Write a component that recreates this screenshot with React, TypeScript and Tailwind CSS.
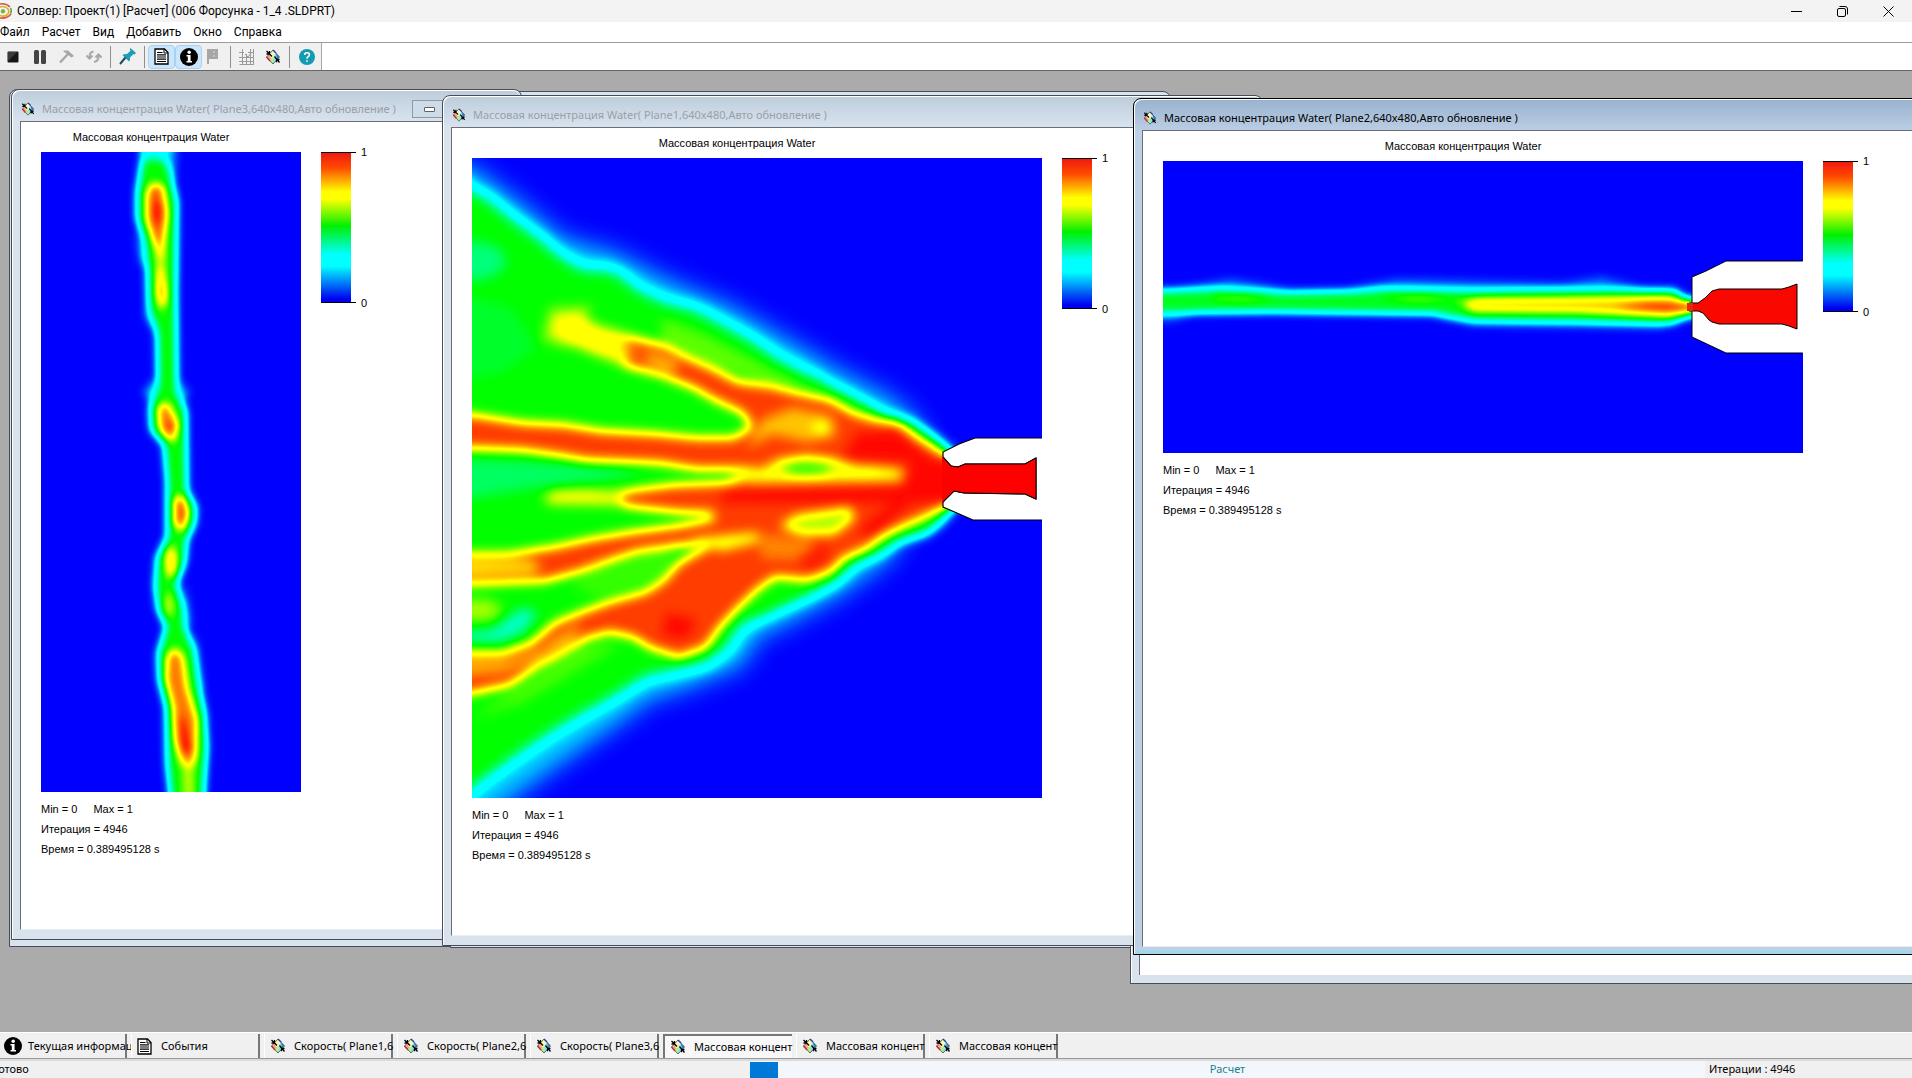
import React from 'react';

const menu = ['Файл', 'Расчет', 'Вид', 'Добавить', 'Окно', 'Справка'];

const tabs = [
  { id: 1, icon: 'info', label: 'Текущая информац' },
  { id: 2, icon: 'doc', label: 'События' },
  { id: 3, icon: 'plane', label: 'Скорость( Plane1,6' },
  { id: 4, icon: 'plane', label: 'Скорость( Plane2,6' },
  { id: 5, icon: 'plane', label: 'Скорость( Plane3,6' },
  { id: 6, icon: 'plane', label: 'Массовая концент', active: true },
  { id: 7, icon: 'plane', label: 'Массовая концент' },
  { id: 8, icon: 'plane', label: 'Массовая концент' },
];

function PlaneIcon({ size = 14 }: { size?: number }) {
  return (
    <svg width={size} height={size} viewBox="0 0 16 16" className="shrink-0" aria-hidden="true">
      <path d="M8 1 L1.5 8 L8 15 L14.5 8 Z" fill="#fff" />
      <path d="M1.5 8 L4.5 5 L7 10 L5 12 Z" fill="#f3a09a" />
      <path d="M4.5 5 L8 1 L10 5 L8 9 L6 9 Z" fill="#fdf7a8" />
      <path d="M4.5 11 L8 8.5 L10 11 L8 15 Z" fill="#b9f07f" />
      <path d="M8 9 L10.5 4 L12 5.5 L12 10.5 L8 15 Z" fill="#8fe6e0" />
      <path d="M11 4 L14.5 8 L12 10.5 Z" fill="#2f7fe0" />
      <path d="M8 1 L1.5 8 L8 15 L14.5 8 Z" fill="none" stroke="#444" strokeWidth="0.8" />
      <path d="M8 1 L11 4" stroke="#1b3fb0" strokeWidth="1.4" />
      <path d="M1.5 8 L5 12" stroke="#c22a20" strokeWidth="1.4" />
      <path d="M1.5 2 L7 7.5 M4.5 2 V5 H1.5 M9.5 7.500 L14.5 13.5 M11.5 13.200 V10.500 H14.500" fill="none" stroke="#000" strokeWidth="1.3" />
    </svg>
  );
}

function InfoIcon() {
  return (
    <svg width="18" height="18" viewBox="0 0 18 18" className="shrink-0" aria-hidden="true">
      <circle cx="9" cy="9" r="9" fill="#000" />
      <circle cx="9.2" cy="4.2" r="1.7" fill="#fff" />
      <path d="M6.5 7 H10.6 V13 H12 V14.5 H6.5 V13 H7.8 V8.5 H6.5 Z" fill="#fff" />
    </svg>
  );
}

function DocIcon() {
  return (
    <svg width="15" height="17" viewBox="0 0 15 17" className="shrink-0" aria-hidden="true">
      <path d="M1 1 H10.5 L14 4.5 V16 H1 Z" fill="#fff" stroke="#000" strokeWidth="1.3" />
      <path d="M10 1 V5 H14" fill="none" stroke="#000" />
      <path d="M3 4.5 H8.5 M3 6.8 H12 M3 9 H12 M3 11.2 H12 M3 13.5 H12" stroke="#000" strokeWidth="1.2" />
    </svg>
  );
}

function TabIcon({ name }: { name: string }) {
  if (name === 'info') return <InfoIcon />;
  if (name === 'doc') return <DocIcon />;
  return <PlaneIcon size={16} />;
}

function ToolButton({ label, on, narrow, children }: { label: string; on?: boolean; narrow?: boolean; children: React.ReactNode }) {
  const width = narrow ? 'w-[25px]' : 'w-[27px]';
  return (
    <button
      aria-label={label}
      className={
        on
          ? `flex h-6 items-center justify-center rounded-sm border border-[#a5d2f5] bg-[#cbe5fa] ${width}`
          : `flex h-6 items-center justify-center ${width}`
      }
    >
      {children}
    </button>
  );
}

function Divider() {
  return <div className="mx-[3px] h-[22px] w-px bg-[#8f8f8f]"></div>;
}

function Toolbar() {
  return (
    <div className="flex h-[27px] bg-white">
      <div className="-ml-px flex items-center border-r border-[#a8a8a8] bg-[#f0f0f0] pr-px">
        <ToolButton label="Стоп">
          <svg width="12" height="12" viewBox="0 0 12 12">
            <rect x="0.5" y="0.5" width="11" height="11" rx="1" fill="#161616" />
            <path d="M1 10 L10 1 L1 1 Z" fill="#3a3a3a" />
          </svg>
        </ToolButton>
        <ToolButton label="Пауза">
          <svg width="12" height="14" viewBox="0 0 12 14">
            <rect x="0" y="0" width="5" height="14" rx="1.5" fill="#444" />
            <rect x="7" y="0" width="5" height="14" rx="1.5" fill="#444" />
          </svg>
        </ToolButton>
        <ToolButton label="Параметры">
          <svg width="16" height="15" viewBox="0 0 16 15">
            <path d="M1 13.5 L9.5 4.5" stroke="#a6a6a6" strokeWidth="2.4" />
            <path d="M4.5 1.5 H9 L15 7 L12.5 8.5 L8 5 L4.5 2.5 Z" fill="#a6a6a6" />
          </svg>
        </ToolButton>
        <ToolButton label="Обновить">
          <svg width="16" height="15" viewBox="0 0 16 15" fill="none" stroke="#a6a6a6" strokeWidth="2">
            <path d="M7.5 2.5 Q3.5 3 3.5 8" />
            <path d="M0.5 6.5 L3.5 9.5 L6.5 6.5" />
            <path d="M8 13 Q12.5 12.5 12.5 7" />
            <path d="M9.5 8.5 L12.5 5.5 L15.5 8.5" />
          </svg>
        </ToolButton>
        <Divider />
        <ToolButton label="Закрепить">
          <svg width="18" height="17" viewBox="0 0 18 17">
            <path d="M11.5 0 L17 5 L15.5 6.5 L14.5 6 L11 9.5 Q11.5 12 10 13.5 L3.5 7 Q5.5 5.5 8 6 L11.5 2.8 L10.8 1.3 Z" fill="#1d9db5" />
            <path d="M6.5 9.5 L1 16" stroke="#1b4a5a" strokeWidth="2" />
          </svg>
        </ToolButton>
        <Divider />
        <ToolButton label="События" on>
          <DocIcon />
        </ToolButton>
        <ToolButton label="Текущая информация" on>
          <InfoIcon />
        </ToolButton>
        <ToolButton label="Цели" narrow>
          <svg width="18" height="17" viewBox="0 0 18 17" className="-ml-1">
            <path d="M3 1 H14 V11 H5 V16 H3 Z" fill="#a6a6a6" />
            <path d="M9 4 H11 M9 8 H11" stroke="#c9c9c9" strokeWidth="1.5" />
          </svg>
        </ToolButton>
        <Divider />
        <ToolButton label="Сетка" narrow>
          <svg width="15" height="16" viewBox="0 0 15 16" fill="none" stroke="#9a9a9a">
            <path d="M0 3.5 H5 M0 8.5 H15 M0 12.5 H15 M0.5 15.5 H15 M3.5 0 V16 M7.5 5 V16 M11.5 0 V16 M14.5 0 V16 M9 3.5 H15" />
            <path d="M6 5 L9 8 L12 4" />
          </svg>
        </ToolButton>
        <ToolButton label="Сечение">
          <PlaneIcon size={16} />
        </ToolButton>
        <Divider />
        <ToolButton label="Справка">
          <svg width="16" height="16" viewBox="0 0 16 16">
            <circle cx="8" cy="8" r="8" fill="#139bb0" />
            <path d="M5.6 6 Q5.6 3.8 8 3.8 Q10.4 3.8 10.4 5.8 Q10.4 7 9 7.8 Q8 8.4 8 9.8 M8 11.2 V12.8" fill="none" stroke="#fff" strokeWidth="1.6" />
          </svg>
        </ToolButton>
      </div>
    </div>
  );
}

// Turns a blurred grey field (0..1) into the blue-cyan-green-yellow-red palette
function Palette({ id, blur }: { id: string; blur: number }) {
  return (
    <filter id={id} filterUnits="userSpaceOnUse" x="-60" y="-60" width="800" height="800" colorInterpolationFilters="sRGB">
      <feGaussianBlur stdDeviation={blur} />
      <feComponentTransfer>
        <feFuncR type="table" tableValues="0 0 0 0 0 0 0 0 0 0 0 .25 .5 .78 1 1 1 1 1 1 1" />
        <feFuncG type="table" tableValues="0 .2 .45 .75 1 1 1 1 1 1 1 1 1 1 1 1 .8 .6 .42 .22 .03" />
        <feFuncB type="table" tableValues="1 1 1 1 1 1 1 .75 .5 .25 0 0 0 0 0 0 0 0 0 0 0" />
      </feComponentTransfer>
    </filter>
  );
}

function Plane1Plot() {
  return (
    <svg width="570" height="640" viewBox="0 0 570 640" className="block">
      <defs>
        <Palette id="field1" blur={6} />
        <filter id="haze1" x="-20%" y="-20%" width="140%" height="140%" colorInterpolationFilters="sRGB">
          <feGaussianBlur stdDeviation="10" />
        </filter>
        <filter id="soft1" x="-20%" y="-20%" width="140%" height="140%" colorInterpolationFilters="sRGB">
          <feGaussianBlur stdDeviation="5" />
        </filter>
      </defs>
      <g filter="url(#field1)">
        <rect x="-60" y="-60" width="800" height="800" fill="#000" />
        <path
          d="M-40 5 L0 22 L41 52 L87 90 L138 104 L193 132 L253 157 L308 189 L358 219 L413 248 L430 262 L440 275 L430 360 L409 395 L363 428 L308 458 L280 470 L262 500 L207 522 L174 532 L142 556 L78 600 L23 640 L-40 690 Z"
          fill="#282828"
          stroke="#282828"
          strokeWidth="26"
          filter="url(#haze1)"
        />
        <path
          d="M-40 -5 L0 32 L14 38 L41 60 L69 80 L87 96 L110 110 L138 111 L152 118 L165 130 L193 143 L225 151 L253 166 L280 181 L308 200 L335 214 L358 229 L380 240 L380 407 L363 423 L335 438 L308 450 L280 463 L266 473 L257 490 L234 507 L207 513 L174 520 L142 540 L106 560 L78 577 L51 595 L23 615 L0 632 L-40 680 Z"
          fill="#808080"
          filter="url(#soft1)"
        />
        <path
          d="M340 216 L358 227 L390 242 L413 255 L441 264 L464 279 L480 293 L480 353 L468 366 L455 376 L427 384 L409 396 L381 408 L363 424 L335 438 L308 450 L280 463 Z"
          fill="#808080"
        />
        <ellipse cx="-4" cy="103" rx="38" ry="20" fill="#676767" />
        <path d="M-30 130 L40 150 L65 190 L30 215 L-30 225 Z" fill="#777" />
        <path d="M-30 300 L50 303 L180 312 L130 322 L60 330 L-30 345 Z" fill="#6c6c6c" />
        <path d="M-10 474 L20 472 L50 450 L66 455 L50 475 L25 484 L-10 482 Z" fill="#565656" />
        <ellipse cx="5" cy="452" rx="24" ry="11" fill="#a0a0a0" />
        <path d="M78 150 L120 148 L98 190 L70 182 Z" fill="#a0a0a0" />
        <path d="M190 160 L235 178 L300 212 L345 228 L300 226 L240 208 L190 184 Z" fill="#929292" />
        <path d="M150 375 L200 372 L200 420 L130 440 L100 430 Z" fill="#8a8a8a" />
        <path d="M60 520 L110 488 L150 485 L110 510 L50 545 L0 560 Z" fill="#8e8e8e" />
        <path
          d="M87 169 L106 162 L138 172 L165 181 L193 188 L216 200 L243 212 L266 224 L298 228 L326 235 L358 242 L381 255 L404 262 L427 265 L445 279 L472 296 L490 300 L490 345 L470 350 L450 360 L427 370 L409 379 L395 390 L372 400 L358 414 L335 422 L303 419 L285 432 L266 450 L248 469 L234 489 L207 499 L179 490 L161 479 L138 474 L115 480 L87 497 L64 509 L37 527 L0 535 L-40 542 L-40 493 L0 495 L32 495 L60 485 L83 465 L110 454 L138 444 L174 434 L193 422 L207 405 L230 392 L248 386 L207 387 L165 393 L138 402 L106 414 L73 423 L0 426 L-40 426 L-40 395 L0 396 L37 396 L83 389 L119 381 L161 374 L207 368 L243 361 L240 355 L207 354 L170 350 L142 346 L78 345 L72 340 L83 334 L115 333 L151 334 L170 331 L202 327 L252 325 L280 321 L335 322 L428 321 L430 312 L385 310 L358 302 L335 299 L308 303 L290 311 L225 311 L188 305 L115 302 L87 297 L51 292 L0 290 L-40 290 L-40 257 L0 257 L51 265 L92 267 L129 273 L184 276 L225 280 L262 280 L280 269 L271 255 L243 242 L220 229 L188 217 L151 207 L129 195 L101 183 Z"
          fill="#f1f1f1"
        />
        <path d="M82 160 L106 156 L130 170 L155 180 L165 196 L150 206 L122 196 L98 186 L82 176 Z" fill="#bababa" />
        <path d="M148 186 L170 188 L178 196 L160 200 Z" fill="#e8e8e8" />
        <path d="M178 194 L208 204 L200 216 L172 204 Z" fill="#cfcfcf" />
        <path d="M320 250 L360 258 L364 278 L335 284 L300 276 L275 290 L290 262 Z" fill="#cecece" />
        <path d="M342 264 L358 266 L354 276 L342 274 Z" fill="#b0b0b0" />
        <path d="M255 318 L300 308 L340 304 L395 314 L430 312 L430 322 L280 324 Z" fill="#b5b5b5" />
        <ellipse cx="335" cy="312" rx="24" ry="5" fill="#808080" />
        <path d="M72 336 L150 333 L150 347 L78 346 Z" fill="#b4b4b4" />
        <path d="M308 368 L325 358 L378 350 L382 360 L362 376 L330 376 Z" fill="#a0a0a0" />
        <path d="M215 382 L285 375 L292 382 L250 392 Z" fill="#b0b0b0" />
        <path d="M285 376 L340 382 L345 402 L290 400 Z" fill="#dedede" />
        <path d="M60 502 L80 482 L110 465 L100 485 L60 507 Z" fill="#cfcfcf" />
        <path d="M-10 498 L40 500 L70 490 L60 505 L30 515 L-10 518 Z" fill="#d4d4d4" />
        <path d="M-10 400 L60 402 L70 410 L60 416 L-10 420 Z" fill="#c6c6c6" />
        <path d="M385 275 L425 272 L460 300 L500 300 L500 345 L440 345 L400 380 L385 372 L420 345 L250 345 L250 332 L430 328 L440 305 L370 300 Z" fill="#fff" />
        <path d="M195 455 L225 462 L215 480 L190 478 Z" fill="#fff" />
        <path d="M325 400 L350 385 L360 396 L340 415 Z" fill="#fafafa" />
      </g>
      <path
        d="M570 280 H503 L487 286 L471 294 V299 L479 308 L486 309 L493 306 H553 L564 300 V341 L553 336 L492 335 L482 333 L471 344 V349 L501 362 H570"
        fill="#fff"
        stroke="#000"
        strokeWidth="1.2"
      />
      <path d="M470 299 L479 308 L486 309 L493 306 H553 L564 300 V341 L553 336 L492 335 L482 333 L470 344 Z" fill="#f00" />
      <path d="M471 299 L479 308 L486 309 L493 306 H553 L564 300 V341 L553 336 L492 335 L482 333 L471 344" fill="none" stroke="#000" />
    </svg>
  );
}

function Plane2Plot() {
  return (
    <svg width="640" height="292" viewBox="0 0 640 292" className="block">
      <defs>
        <Palette id="field2" blur={4} />
      </defs>
      <g filter="url(#field2)">
        <rect x="-60" y="-60" width="800" height="800" fill="#000" />
        <path d="M10 128 L68 118 L130 128 Z M180 128 L235 118 L400 122 L438 116 L480 126 Z M270 155 L310 164 L500 167 L500 158 Z M-20 150 H40 L10 160 H-20 Z" fill="#1c1c1c" />
        <path
          d="M-30 130 L58 128 L124 131 L189 130 L220 128 L311 129 L440 128 L512 129 L522 137 L535 138 L535 154 L522 157 L508 163 L412 161 L311 160 L270 153 L109 151 L0 152 L-30 153 Z"
          fill="#7a7a7a"
        />
        <path d="M50 133 L90 132 L110 137 L80 140 L50 138 Z M215 134 L260 132 L300 138 L250 141 Z" fill="#929292" />
        <path d="M290 140 L320 136 L505 134 L522 139 L530 141 L530 152 L505 156 L412 151 L311 150 Z" fill="#a4a4a4" />
        <path d="M300 145 L311 140 L412 139 L505 137 L520 141 L535 142 L535 149 L520 151 L505 154 L412 150 L311 149 Z" fill="#d0d0d0" />
        <path d="M450 146 L485 142 L535 143 L535 149 L500 150 L475 148 Z" fill="#fff" />
      </g>
      <path d="M641 100 H563 L543 110 L529 116 V176 L563 192 H641 Z" fill="#fff" stroke="#000" />
      <path
        d="M526 142 H535 L542 137 L546 133 L549 130 L556 128 H619 L626 126 L634 123 V168 L626 165 L619 163 H556 L549 161 L546 159 L540 152 L535 150 H526 Z"
        fill="#f90800"
        stroke="#000"
      />
      <path d="M524 142 H530 V150 H524 Z" fill="#e02a08" />
      <path d="M639.5 100.500 H642 V191.500 H639.5 Z" fill="#fff" />
    </svg>
  );
}

function Plane3Plot() {
  return (
    <svg width="260" height="640" viewBox="0 0 260 640" className="block">
      <defs>
        <Palette id="field3" blur={4} />
      </defs>
      <g filter="url(#field3)">
        <rect x="-60" y="-60" width="800" height="800" fill="#000" />
        <path d="M118 -30 H137 L133 30 Z M94 80 L100 112 L114 120 Z M102 160 L120 192 L110 160 Z M102 240 L116 225 L116 260 Z M148 240 L138 228 L138 260 Z M144 430 L150 475 L140 470 Z M154 480 L162 540 L150 520 Z" fill="#282828" />
        <path
          d="M103 -30 L102 0 L96 40 L96 66 L103 90 L106 110 L107 155 L116 178 L117 235 L109 255 L110 278 L123 293 L126 328 L126 385 L116 405 L114 435 L117 458 L125 475 L117 501 L118 528 L125 555 L126 611 L129 640 L132 680 H163 L163 640 L166 595 L164 561 L157 528 L153 497 L143 472 L142 455 L136 431 L144 411 L146 388 L154 371 L155 355 L146 338 L145 258 L136 241 L135 141 L136 50 L129 18 L121 0 L119 -30 Z"
          fill="#808080"
        />
        <path d="M100 -30 H125 V8 H100 Z" fill="#4a4a4a" />
        <path d="M106 41 L112 31 L122 35 L126 61 L122 95 L122 115 L124 141 L121 161 L117 141 L117 101 L106 68 Z" fill="#ececec" />
        <path d="M111 52 L121 50 L120 75 L113 68 Z" fill="#fff" />
        <path d="M117 138 L123 128 L124 150 L120 156 Z" fill="#fff" />
        <path d="M115 102 H124 L122 116 H118 Z" fill="#c0c0c0" />
        <path d="M117 256 L126 250 L137 272 L132 291 L119 278 Z" fill="#e4e4e4" />
        <path d="M127 268 L134 274 L131 283 L126 276 Z" fill="#fff" />
        <path d="M134 348 L141 343 L147 361 L141 380 L134 371 Z" fill="#f8f8f8" />
        <ellipse cx="130" cy="410" rx="5" ry="16" fill="#d0d0d0" />
        <ellipse cx="128" cy="453" rx="5" ry="12" fill="#a8a8a8" />
        <path d="M126 505 L134 496 L142 505 L146 535 L156 568 L155 600 L151 622 L142 615 L134 588 L132 555 L125 528 Z" fill="#e2e2e2" />
        <path d="M142 612 L152 612 L152 660 L144 660 Z" fill="#acacac" />
        <path d="M137 560 L144 570 L152 600 L139 602 Z" fill="#fff" />
      </g>
    </svg>
  );
}

function Scale() {
  return (
    <div className="flex h-[151px] text-[11px] leading-4">
      <div className="flex w-[35px] flex-col border-y border-black">
        <div className="w-[30px] flex-1 bg-[linear-gradient(to_bottom,#f01a10,#ff4a00_10%,#ffff00_26%,#ffff00_31%,#00f000_49%,#00ffff_68%,#00ffff_76%,#0000f0_98%)]"></div>
      </div>
      <div className="-my-2 flex flex-col justify-between pl-[5px]">
        <span>1</span>
        <span>0</span>
      </div>
    </div>
  );
}

type WindowProps = {
  place: string;
  title: string;
  titleWidth: string;
  active?: boolean;
  minimize?: boolean;
  children?: React.ReactNode;
};

function PlotWindow({ place, title, titleWidth, active, minimize, children }: WindowProps) {
  return (
    <section
      className={
        active
          ? `absolute flex flex-col rounded-t-lg border border-black bg-[#bdd0e5] pb-[7px] pl-[8px] pr-[8px] shadow-[inset_1px_1px_0_#fff,inset_0_-4px_0_#a5d5e6] ${place}`
          : `absolute flex flex-col rounded-t-lg border border-[#484c58] bg-[#d8e3ee] pb-[9px] pl-[8px] pr-[8px] shadow-[inset_1px_1px_0_#fff] ${place}`
      }
    >
      <header
        className={
          active
            ? '-mx-[7px] mt-px flex h-[30px] items-center gap-[7px] rounded-t-lg bg-linear-to-b from-[#9ab3cf] to-[#bacde4] pl-[8px] pt-[6px] text-black'
            : '-mx-[7px] mt-px flex h-[30px] items-center gap-[7px] rounded-t-lg bg-linear-to-b from-[#bfcddb] to-[#d8e3ef] pl-[8px] pt-[6px] text-[#9a9fa6]'
        }
      >
        <PlaneIcon />
        <h2 className="w-[363px] whitespace-nowrap font-['Noto_Sans',sans-serif] text-[11px]">{title}</h2>
        {minimize && (
          <button aria-label="Свернуть" className="flex h-[18px] w-[34px] items-center justify-center border border-[#8d99a8] bg-[#cfdbe7]">
            <span className="h-[5px] w-[11px] rounded-[1px] border border-[#5a5f68] bg-white"></span>
          </button>
        )}
      </header>
      <div className="flex-1 border-b border-l border-t border-[#6a6e76] border-b-[#e8eef4] bg-white">
        {children && (
          <div className="text-[11px] text-black">
            <h3 className={`flex h-[30px] items-center justify-center ${titleWidth}`}>Массовая концентрация Water</h3>
            <div className="flex gap-5 pl-5">
              {children}
              <Scale />
            </div>
            <div className="pl-5 pt-[7px] leading-5">
              <p>
                <span className="mr-4">Min = 0</span>
                <span>Max = 1</span>
              </p>
              <p>Итерация = 4946</p>
              <p>Время = 0.389495128 s</p>
            </div>
          </div>
        )}
      </div>
    </section>
  );
}

export default function App() {
  return (
    <div className="flex h-screen flex-col overflow-hidden bg-[#f0f0f0] font-['Liberation_Sans',Arial,sans-serif] text-black">
      <header className="flex h-[22px] shrink-0 items-center bg-[#f3f3f3] font-[Roboto,sans-serif]">
        <svg width="12" height="16" viewBox="0 0 12 16" className="mr-[5px] shrink-0" aria-hidden="true">
          <g fill="none" strokeWidth="1.6">
            <path d="M0 1 Q6 0 10 4" stroke="#d9534a" />
            <path d="M0 4 Q5 2.500 8 6 Q10 9 7 12 Q4 14 0 12.500" stroke="#d7b21e" />
            <path d="M0 15 Q7 16 11 11" stroke="#d9534a" />
            <path d="M10.500 5 Q12 8 10.500 10.500" stroke="#5aa84c" />
          </g>
          <circle cx="3" cy="8.200" r="2.200" fill="#7fb24a" />
        </svg>
        <h1 className="flex-1 whitespace-nowrap text-xs">Солвер: Проект(1) [Расчет] (006 Форсунка - 1_4 .SLDPRT)</h1>
        <div className="flex pr-px">
          <button aria-label="Свернуть" className="flex w-[46px] justify-center">
            <svg width="11" height="11" viewBox="0 0 11 11" stroke="#000"><path d="M0 5.500 H11" /></svg>
          </button>
          <button aria-label="Восстановить" className="flex w-[46px] justify-center">
            <svg width="11" height="11" viewBox="0 0 11 11" fill="none" stroke="#000">
              <rect x="0.500" y="2.500" width="8" height="8" rx="1.500" />
              <path d="M2.500 0.500 H8 Q10.500 0.500 10.500 3 V8.500" />
            </svg>
          </button>
          <button aria-label="Закрыть" className="flex w-[46px] justify-center">
            <svg width="11" height="11" viewBox="0 0 11 11" stroke="#000"><path d="M0.500 0.500 L10.500 10.500 M10.500 0.500 L0.500 10.500" /></svg>
          </button>
        </div>
      </header>

      <nav className="flex h-[21px] shrink-0 items-center gap-3 border-b border-[#9c9c9c] bg-white font-[Roboto,sans-serif] text-xs">
        {menu.map((m) => (
          <button key={m}>{m}</button>
        ))}
      </nav>

      <Toolbar />

      <main className="relative flex-1 overflow-hidden border-t border-[#666] bg-[#ababab]">
        <div className="absolute left-[9px] top-[18px] h-[858px] w-[511px] rounded-t-lg border border-[#484c58] bg-[#d8e3ee]"></div>
        <div className="absolute left-[450px] top-[20px] h-[857px] w-[721px] rounded-t-lg border border-[#484c58] bg-[#d8e3ee]"></div>
        <div className="absolute -right-[60px] left-[1130px] top-[60px] h-[853px] border border-[#484c58] bg-[#d8e3ee] pb-[8px] pl-[8px] shadow-[inset_1px_0_0_#fff]">
          <div className="h-full border-l border-[#6a6e76] bg-white"></div>
        </div>

        <PlotWindow
          place="left-[11px] top-[18px] h-[851px] w-[511px]"
          title="Массовая концентрация Water( Plane3,640x480,Авто обновление )"
          titleWidth="w-[260px]"
          minimize
        >
          <Plane3Plot />
        </PlotWindow>
        <PlotWindow
          place="left-[442px] top-[24px] h-[851px] w-[821px]"
          title="Массовая концентрация Water( Plane1,640x480,Авто обновление )"
          titleWidth="w-[570px]"
        >
          <Plane1Plot />
        </PlotWindow>
        <PlotWindow
          place="-right-[60px] left-[1133px] top-[27px] h-[857px]"
          title="Массовая концентрация Water( Plane2,640x480,Авто обновление )"
          titleWidth="w-[640px]"
          active
        >
          <Plane2Plot />
        </PlotWindow>
      </main>

      <div className="flex h-[27px] shrink-0 border-b border-t border-b-[#989898] border-t-white bg-[#f0f0f0] pt-px font-['Noto_Sans',sans-serif]">
        <div className="-ml-[2px] flex gap-1">
          {tabs.map((t) => (
            <button
              key={t.id}
              className={
                t.active
                  ? 'flex h-6 w-[129px] items-center border-l-2 border-t-2 border-[#777] bg-[#f8f8f8] pl-[5px] text-[11px]'
                  : 'flex h-6 w-[129px] items-center border-l border-r-2 border-l-white border-r-[#777] bg-[#f0f0f0] pl-[5px] text-[11px]'
              }
            >
              <span className="flex w-6 shrink-0">
                <TabIcon name={t.icon} />
              </span>
              <span className="whitespace-nowrap">{t.label}</span>
            </button>
          ))}
        </div>
      </div>

      <footer className="flex h-[19px] shrink-0 border-t-2 border-[#dcdcdc] bg-[#f0f0f0] font-['Noto_Sans',sans-serif] text-[11px] leading-4">
        <span className="-ml-[7px] w-[757px]">Готово</span>
        <div className="flex flex-1 bg-[#f3f7fb]">
          <div className="mt-px w-7 bg-[#0078d7]"></div>
          <span className="flex-1 pr-[28px] text-center text-[#1b7f92]">Расчет</span>
        </div>
        <span className="w-[207px] pl-1">Итерации : 4946</span>
      </footer>
    </div>
  );
}
